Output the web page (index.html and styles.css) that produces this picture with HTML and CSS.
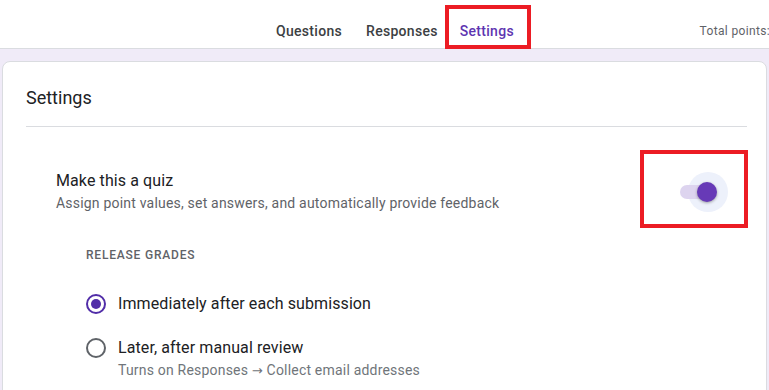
FILE: index.html
```html
<!DOCTYPE html>
<html lang="en">
<head>
<meta charset="UTF-8">
<title>Settings</title>
<link rel="stylesheet" href="styles.css">
</head>
<body>
	<header class="topbar">
		<nav class="tabs">
			<a class="tab">Questions</a>
			<a class="tab">Responses</a>
			<a class="tab active">Settings</a>
		</nav>
		<span class="total">Total points:</span>
	</header>

	<main class="page">
		<section class="card">
			<h1 class="cardTitle">Settings</h1>

			<div class="quizRow">
				<div class="quizText">
					<div class="quizTitle">Make this a quiz</div>
					<div class="quizSub">Assign point values, set answers, and automatically provide feedback</div>
				</div>
				<div class="markBox">
					<span class="switch"><span class="halo"></span><span class="track"></span><span class="knob"></span></span>
				</div>
			</div>

			<div class="release">
				<div class="label">RELEASE GRADES</div>
				<div class="radioRow">
					<span class="radio checked"></span>
					<div class="radioText">Immediately after each submission</div>
				</div>
				<div class="radioRow">
					<span class="radio"></span>
					<div class="radioText">
						Later, after manual review
						<div class="radioSub">Turns on Responses <span class="arrow">&rarr;</span> Collect email addresses</div>
					</div>
				</div>
			</div>
		</section>
	</main>
</body>
</html>
```

FILE: styles.css
```css
* { padding: 0; margin: 0; box-sizing: border-box; }
html, body { height: 100%; overflow: hidden; }
body { font-family: Roboto, "Liberation Sans", sans-serif; color: #202124; background-color: #f0ebf8; }

/* top tabs */
.topbar { display: flex; height: 49px; padding-top: 5px; background-color: #fff; border-bottom: 1px solid #dadce0; white-space: nowrap; }
.tabs { display: flex; height: 44px; padding-left: 264px; }
.tab { padding: 12px 12px 0 12px; font-size: 14px; line-height: 20px; font-weight: 500; letter-spacing: 0.3px; color: #3c4043; border-top: 4px solid transparent; }
.tab.active { color: #5e35b1; border: 4px solid #ec1c24; padding: 12px 13px 0 11px; margin-left: -5px; }
.total { margin-left: auto; padding-top: 16px; font-size: 12px; line-height: 20px; letter-spacing: 0.35px; color: #5f6368; margin-right: -1px; }

/* card */
.page { padding: 12px 2px 0 2px; }
.card { background-color: #fff; border: 1px solid #dadce0; border-radius: 8px; padding: 0 19px 40px 23px; height: 360px; }
.cardTitle { font-size: 18px; line-height: 24px; font-weight: 400; padding-top: 24px; padding-bottom: 16px; border-bottom: 1px solid #dadce0; }

.quizRow { display: flex; justify-content: space-between; margin-top: 23px; margin-right: -1px; }
.quizText { padding-left: 30px; margin-top: 19px; }
.quizTitle { font-size: 16px; line-height: 24px; letter-spacing: 0.1px; }
.quizSub { font-size: 14px; line-height: 20px; letter-spacing: 0.2px; color: #5f6368; }
.markBox { width: 108px; height: 78px; border: 4px solid #ec1c24; padding: 31px 0 0 36px; }

.switch { display: block; position: relative; width: 36px; height: 14px; }
.halo { position: absolute; left: 8px; top: -13px; width: 40px; height: 40px; border-radius: 50%; background-color: #edf1fb; }
.track { position: absolute; left: 0; top: 0; width: 36px; height: 14px; border-radius: 7px; background-color: #ddd4ef; }
.knob { position: absolute; left: 17px; top: -3px; width: 20px; height: 20px; border-radius: 50%; background-color: #673ab7; box-shadow: 0 1px 3px rgba(0,0,0,0.35); }

/* release grades */
.release { padding-left: 60px; }
.label { margin-top: 19px; font-size: 12px; line-height: 16px; font-weight: 500; letter-spacing: 0.8px; color: #5f6368; }
.radioRow { display: flex; align-items: flex-start; margin-top: 20px; }
.release .label + .radioRow { margin-top: 29px; }
.radio { width: 20px; height: 20px; margin: 2px 12px 0 0; border: 2px solid #5f6368; border-radius: 50%; display: flex; align-items: center; justify-content: center; flex: none; }
.radio.checked { border-color: #512da8; }
.radio.checked::after { content: ""; width: 10px; height: 10px; border-radius: 50%; background-color: #512da8; }
.radioText { font-size: 16px; line-height: 24px; letter-spacing: 0.1px; }
.radioSub { font-size: 14px; line-height: 20px; letter-spacing: 0.2px; color: #70757a; }
.arrow { font-family: "DejaVu Sans", sans-serif; font-size: 13px; }
```
